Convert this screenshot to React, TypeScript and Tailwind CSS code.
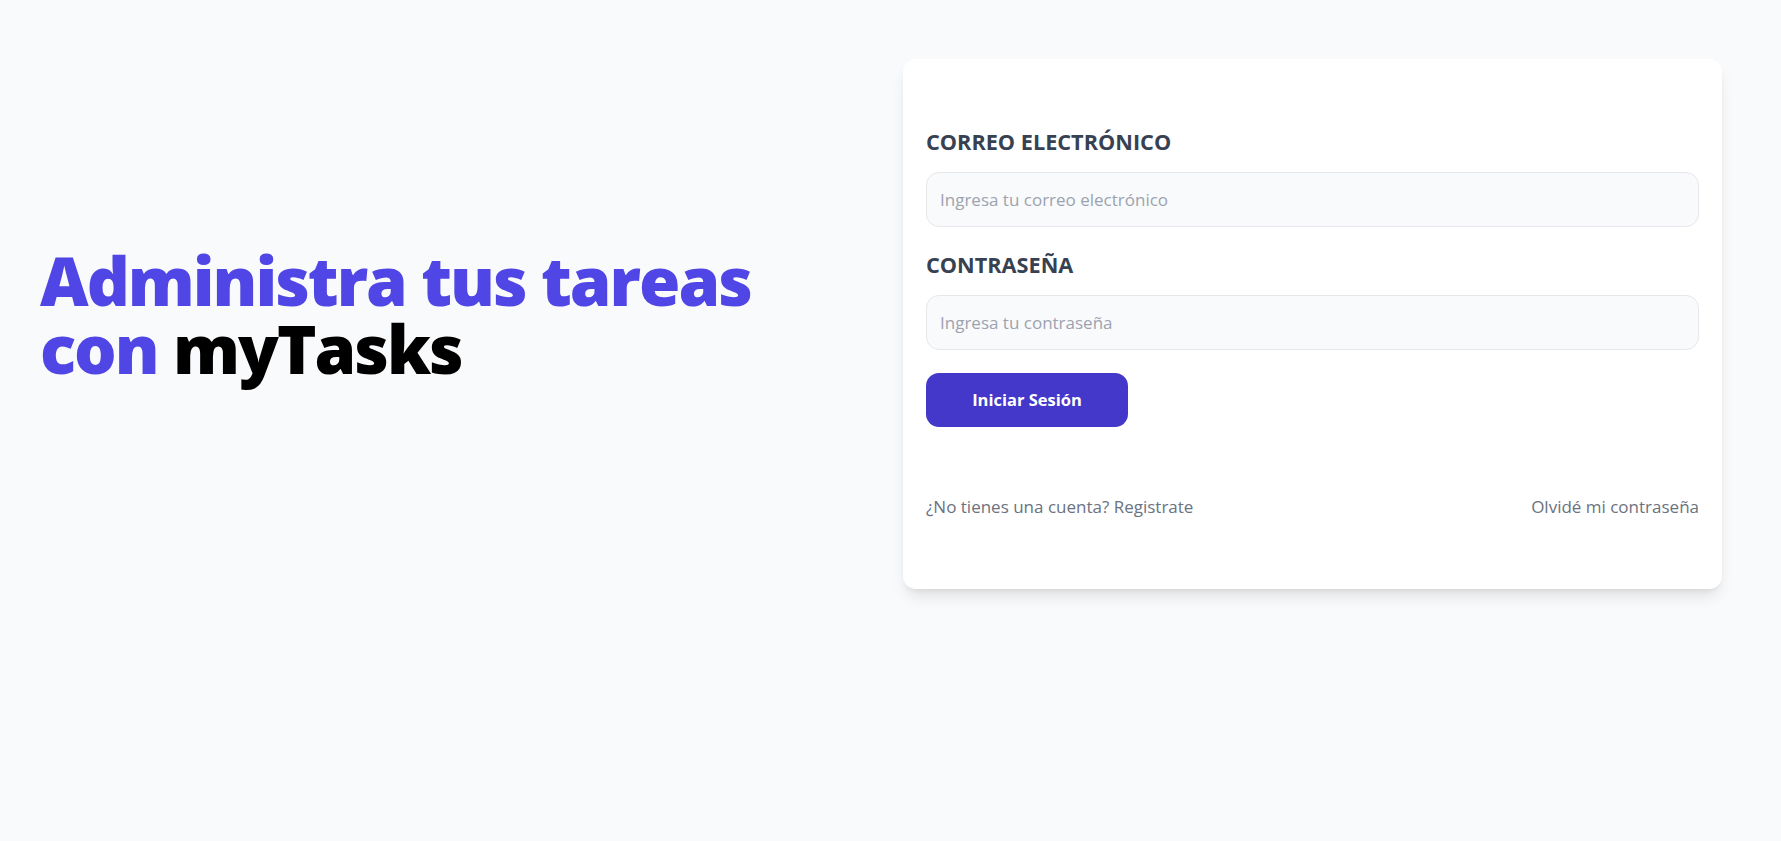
import { useState } from 'react'

const body = { fontFamily: '"Open Sans", "Noto Sans", sans-serif' }

export default function App() {
  const [email, setEmail] = useState('')
  const [password, setPassword] = useState('')

  return (
    <div className="min-h-screen bg-[#f9fafb] pt-[59px] pl-10 pr-[59px]" style={body}>
      <div className="w-full flex items-center">
        <div className="flex-1 mb-5">
          <h1 className="text-[67px] leading-[68px] font-extrabold tracking-[-2px]">
            <span className="block text-[#4f46e5]">Administra tus tareas</span>
            <span className="block">
              <span className="text-[#4f46e5]">con</span>{' '}
              <span className="text-black">myTasks</span>
            </span>
          </h1>
        </div>

        <div className="w-[819px] bg-white rounded-[13px] shadow-lg px-[23px] pt-[68px] pb-[69px]">
          <form className="flex flex-col" onSubmit={(e) => e.preventDefault()}>
            <label className="text-[21.7px] leading-[30px] font-bold text-[#374151] mb-[15px]">
              CORREO ELECTRÓNICO
            </label>
            <input
              type="email"
              value={email}
              onChange={(e) => setEmail(e.target.value)}
              placeholder="Ingresa tu correo electrónico"
              className="h-[55px] w-full rounded-[13px] border border-[#e5e7eb] bg-[#f9fafb] px-[13px] text-[17px] text-[#374151] placeholder:text-[#9ca3af] focus:outline-none"
            />

            <label className="mt-[23px] text-[21.7px] leading-[30px] font-bold text-[#374151] mb-[15px]">
              CONTRASEÑA
            </label>
            <input
              type="password"
              value={password}
              onChange={(e) => setPassword(e.target.value)}
              placeholder="Ingresa tu contraseña"
              className="h-[55px] w-full rounded-[13px] border border-[#e5e7eb] bg-[#f9fafb] px-[13px] text-[17px] text-[#374151] placeholder:text-[#9ca3af] focus:outline-none"
            />

            <button
              type="submit"
              className="mt-[23px] self-start w-[202px] h-[54px] rounded-[13px] bg-[#4338ca] text-white font-bold text-[16.5px]"
            >
              Iniciar Sesión
            </button>
          </form>

          <div className="mt-[67px] flex items-center justify-between text-[17px] leading-[26px] text-[#6b7280]">
            <a href="#">¿No tienes una cuenta? Registrate</a>
            <a href="#">Olvidé mi contraseña</a>
          </div>
        </div>
      </div>
    </div>
  )
}
